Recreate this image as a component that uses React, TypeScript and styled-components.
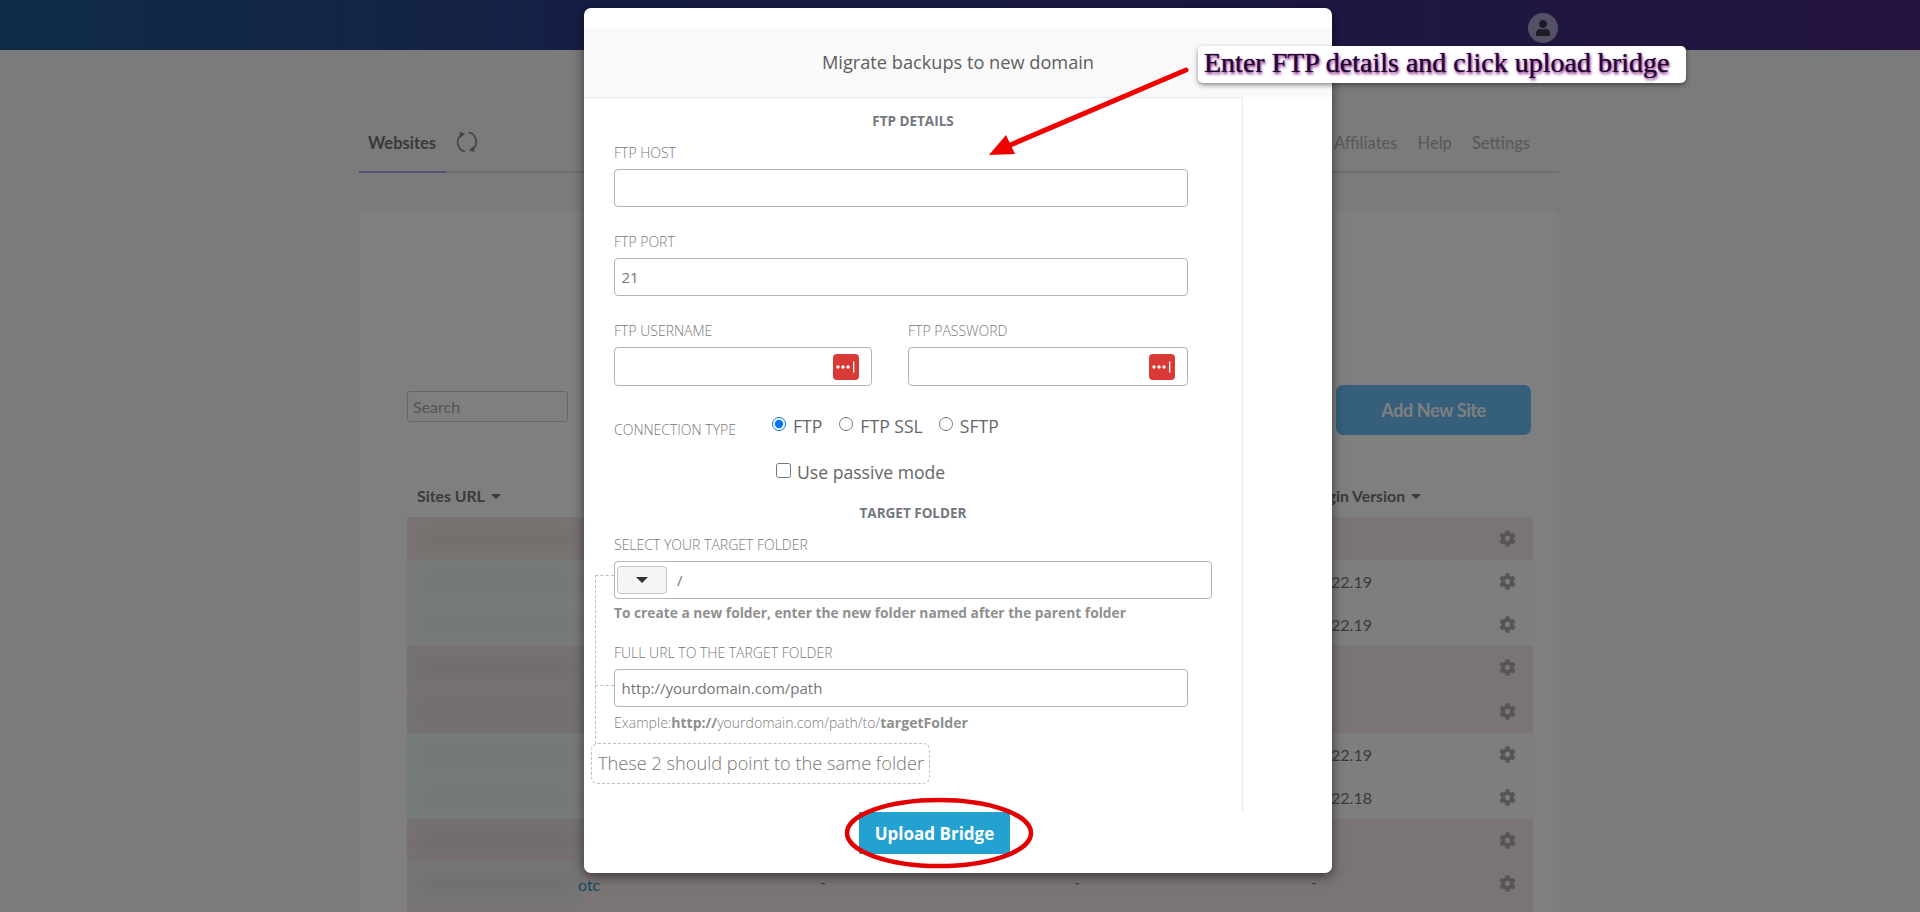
import React from "react";
import styled, { createGlobalStyle } from "styled-components";
import { FaCog, FaUser } from "react-icons/fa";

const Global = createGlobalStyle`
  html, body { margin: 0; height: 912px; overflow: hidden; background: #f6f7f7; }
  * { box-sizing: border-box; }
  body { font-family: Lato, "Open Sans", sans-serif; }
`;

const Page = styled.div`
  position: relative;
  width: 1920px;
  height: 912px;
  overflow: hidden;
`;
const TopBar = styled.header`
  height: 50px;
  background: linear-gradient(90deg, #1e5a8e 0%, #2c3c8a 32%, #48287e 100%);
  display: flex;
  justify-content: flex-end;
  align-items: center;
  padding: 6px 362px 0 0;
`;
const Avatar = styled.div`
  width: 30px;
  height: 30px;
  border-radius: 50%;
  background: #a8a0ca;
  color: #3b3650;
  display: flex;
  align-items: center;
  justify-content: center;
  font-size: 16px;
`;
const Main = styled.main`
  width: 1200px;
  margin-left: 359px;
`;
const Nav = styled.nav`
  margin-top: 73px;
  height: 50px;
  display: flex;
  align-items: stretch;
  border-bottom: 2px solid #dcdcdc;
  font-size: 16.5px;
`;
const ActiveTab = styled.div`
  width: 87px;
  margin-bottom: -2px;
  border-bottom: 2px solid #b49be8;
  padding-left: 9px;
  padding-top: 10px;
  font-weight: 700;
  color: #747474;
`;
const Refresh = styled.svg`
  width: 24px;
  height: 24px;
  margin: 7px 0 0 9px;
  color: #8a8a8a;
`;
const NavLinks = styled.div`
  margin-left: auto;
  display: flex;
  gap: 20px;
  padding: 10px 29px 0 0;
  color: #b4b4b4;
  font-weight: 500;
`;
const Card = styled.section`
  margin-top: 38px;
  height: 720px;
  background: #fff;
  border-radius: 8px;
  padding: 174px 26px 0 48px;
`;
const Toolbar = styled.div`
  height: 50px;
  display: flex;
  justify-content: space-between;
  align-items: flex-start;
  padding-top: 6px;
`;
const Search = styled.input`
  width: 161px;
  height: 31px;
  margin: 0;
  padding: 0 5px;
  border: 1px solid #cfcfcf;
  border-radius: 3px;
  background: #fff;
  font: 16px Lato, sans-serif;
  &::placeholder { color: #aaa; opacity: 1; }
`;
const AddButton = styled.div`
  width: 195px;
  height: 50px;
  margin: -6px 2px 0 0;
  border-radius: 7px;
  background: #6abef6;
  color: #fff;
  font-size: 18px;
  font-weight: 700;
  letter-spacing: -0.4px;
  display: flex;
  align-items: center;
  justify-content: center;
`;
const HeadRow = styled.div`
  height: 82px;
  padding: 51px 0 0 10px;
  display: grid;
  grid-template-columns: 888px 1fr;
  color: #747474;
  font-size: 15.8px;
  font-weight: 700;
`;
const Caret = styled.span`
  display: inline-block;
  margin-left: 6px;
  border-left: 5px solid transparent;
  border-right: 5px solid transparent;
  border-top: 5px solid #747474;
  vertical-align: 3px;
`;
const Row = styled.div<{ $alert?: boolean }>`
  height: 43.15px;
  display: grid;
  grid-template-columns: 413px 254px 237px 140px 1fr;
  align-items: center;
  background: ${(p) => (p.$alert ? "#f7e9e9" : "#fcfcfc")};
  color: #767676;
  font-size: 16px;
`;
const SiteCell = styled.div`
  position: relative;
  height: 43px;
  line-height: 45px;
  padding-left: 171px;
  color: #2c95bc;
  overflow: hidden;
`;
const Smear = styled.span<{ $tint: string }>`
  position: absolute;
  left: 0;
  top: 0;
  width: 175px;
  height: 44px;
  background: ${(p) => p.$tint};
  overflow: hidden;
  &::after {
    content: "";
    position: absolute;
    left: 14px;
    right: 10px;
    top: 14px;
    height: 16px;
    background: rgba(0, 0, 0, 0.035);
    filter: blur(7px);
  }
`;
const SiteName = styled.span`
  position: relative;
`;
const Dash = styled.div`
  line-height: 1;
  margin-top: -4px;
`;
const Version = styled.div`
  padding-left: 7px;
`;
const Gear = styled.div`
  padding-left: 48px;
  display: flex;
  color: #aaa;
  font-size: 17px;
`;

const Backdrop = styled.div`
  position: absolute;
  inset: 0;
  background: rgba(0, 0, 0, 0.5);
`;
const Modal = styled.div`
  position: absolute;
  left: 584px;
  top: 8px;
  width: 748px;
  height: 865px;
  padding-top: 19px;
  background: #fff;
  border-radius: 7px;
  box-shadow: 0 3px 12px rgba(0, 0, 0, 0.55);
  font-family: "Open Sans", sans-serif;
`;
const ModalHead = styled.div`
  height: 70px;
  background: #f9f9f9;
  color: #5e5e5e;
  font-size: 18.2px;
  display: flex;
  align-items: center;
  justify-content: center;
`;
const ModalBody = styled.div`
  width: 659px;
  height: 715px;
  padding: 14px 0 0 30px;
  border-top: 1px solid #eaeaea;
  border-right: 1px solid #eaeaea;
  position: relative;
`;
const SectionTitle = styled.div<{ $top?: number }>`
  width: 598px;
  height: 18px;
  line-height: 18px;
  text-align: center;
  font-size: 13.5px;
  font-weight: 700;
  color: #73777e;
  margin-top: ${(p) => p.$top ?? 0}px;
`;
const Label = styled.label<{ $top?: number }>`
  display: block;
  height: 18px;
  line-height: 18px;
  font-size: 14px;
  font-weight: 300;
  color: #777;
  margin: ${(p) => p.$top ?? 0}px 0 7px;
`;
const Input = styled.input<{ $w?: number; $h?: number }>`
  display: block;
  width: ${(p) => p.$w ?? 574}px;
  height: ${(p) => p.$h ?? 38}px;
  margin: 0;
  padding: 0 6.5px 1px;
  border: 1px solid #b5b5b5;
  border-radius: 4px;
  background: #fff;
  font: 15px "Open Sans", sans-serif;
  color: #757575;
`;
const TwoCols = styled.div`
  display: flex;
  gap: 36px;
  margin-top: 26px;
`;
const FieldBox = styled.div`
  position: relative;
`;
const PassIcon = styled.svg`
  position: absolute;
  right: 13px;
  bottom: 6px;
  width: 26px;
  height: 26px;
`;
const ConnectionRow = styled.div`
  display: flex;
  height: 38px;
  margin-top: 26px;
`;
const ConnLabel = styled.span`
  width: 158px;
  font-size: 14px;
  font-weight: 300;
  color: #777;
  padding-top: 9px;
  line-height: 18px;
`;
const Choice = styled.label<{ $gap: number }>`
  display: flex;
  align-items: flex-start;
  margin: 2px ${(p) => p.$gap}px 0 0;
  font-size: 17.6px;
  color: #666;
  line-height: 24px;
`;
const Radio = styled.input`
  width: 14px;
  height: 14px;
  margin: 3px 7px 0 0;
`;
const PassiveRow = styled.label`
  display: flex;
  align-items: flex-start;
  margin: 9px 0 0 162px;
  height: 27px;
  font-size: 17.6px;
  color: #666;
  line-height: 26px;
`;
const Check = styled.input`
  width: 15px;
  height: 15px;
  margin: 4px 6px 0 0;
`;
const FolderBox = styled.div`
  position: relative;
  width: 598px;
  height: 38px;
  border: 1px solid #b5b5b5;
  border-radius: 4px;
  display: flex;
  align-items: center;
  padding-left: 2px;
  background: #fff;
  font-size: 15px;
  color: #757575;
`;
const DropButton = styled.div`
  width: 50px;
  height: 28px;
  border: 1px solid #c4c4c4;
  border-radius: 4px;
  background: #f5f5f5;
  display: flex;
  align-items: center;
  justify-content: center;
  margin-right: 10px;
  &::before {
    content: "";
    border-left: 6px solid transparent;
    border-right: 6px solid transparent;
    border-top: 6px solid #333;
  }
`;
const Help = styled.div<{ $bold?: boolean }>`
  height: 18px;
  line-height: 18px;
  margin-top: ${(p) => (p.$bold ? 5 : 7)}px;
  font-size: ${(p) => (p.$bold ? 13.75 : 14.05)}px;
  font-weight: ${(p) => (p.$bold ? 700 : 300)};
  color: ${(p) => (p.$bold ? "#8f8f8f" : "#7c7c7c")};
  white-space: nowrap;
  b { font-weight: 700; color: #8f8f8f; }
`;
const SameFolder = styled.div`
  width: 339px;
  height: 41px;
  margin: 11px 0 0 -23px;
  padding-left: 6px;
  border: 1px dashed #bdbdbd;
  border-radius: 7px;
  font-size: 18.2px;
  font-weight: 300;
  line-height: 38px;
  color: #777;
  white-space: nowrap;
`;
const Bracket = styled.div`
  position: absolute;
  left: 11px;
  top: 477px;
  width: 19px;
  height: 169px;
  border-left: 1px dashed #bdbdbd;
  border-top: 1px dashed #bdbdbd;
`;
const BracketTick = styled.div`
  position: absolute;
  left: 11px;
  top: 587px;
  width: 19px;
  border-top: 1px dashed #bdbdbd;
`;
const ModalFoot = styled.div`
  display: flex;
  justify-content: center;
  padding-right: 47px;
`;
const UploadButton = styled.button`
  width: 151px;
  height: 42px;
  border: 0;
  margin: 0;
  background: #23a1d1;
  color: #fff;
  font: 700 17px "Open Sans", sans-serif;
`;
const Callout = styled.div`
  position: absolute;
  left: 1198px;
  top: 46px;
  width: 488px;
  height: 37px;
  padding-left: 6px;
  background: #fff;
  border-radius: 5px;
  box-shadow: 0 2px 5px rgba(0, 0, 0, 0.45);
  font-family: "Liberation Serif", serif;
  font-size: 28px;
  line-height: 34px;
  white-space: nowrap;
  color: #1d0b2e;
  text-shadow: 1px 2px 3px #7a107a, 0 0 1px #800080;
`;
const Annotations = styled.svg`
  position: absolute;
  left: 0;
  top: 0;
  pointer-events: none;
`;

const rows = [
  { alert: true, tint: "#f1e6e4" },
  { tint: "#eef6f6", version: "4.22.19" },
  { tint: "#eef6f6", version: "4.22.19" },
  { alert: true, tint: "#ebe3e1" },
  { alert: true, tint: "#ebe3e1" },
  { tint: "#edf6f6", version: "4.22.19" },
  { tint: "#edf6f6", version: "4.22.18" },
  { alert: true, tint: "#ebe2e0" },
  { alert: true, tint: "#e8eaea", site: "otc", dash: true },
  { alert: true, tint: "transparent" },
];

const LastPass = () => (
  <PassIcon viewBox="0 0 26 26">
    <rect width="26" height="26" rx="4" fill="#d93a36" />
    <circle cx="5" cy="13" r="1.7" fill="#fff" />
    <circle cx="10" cy="13" r="1.7" fill="#fff" />
    <circle cx="15" cy="13" r="1.7" fill="#fff" />
    <rect x="20" y="7.5" width="1.3" height="11" fill="#fff" />
  </PassIcon>
);

export default function App() {
  return (
    <Page>
      <Global />
      <TopBar>
        <Avatar>
          <FaUser />
        </Avatar>
      </TopBar>
      <Main>
        <Nav>
          <ActiveTab>Websites</ActiveTab>
          <Refresh viewBox="0 0 24 24" fill="none" stroke="currentColor" strokeWidth="1.7">
            <path d="M6 4.8A10 10 0 0 0 10.2 21.8" />
            <path d="M13.8 2.2A10 10 0 0 1 18 19.2" />
            <path d="M4.5 1.8L10 3.5L5.5 8Z" fill="currentColor" stroke="none" />
            <path d="M19.5 22.2L14 20.5L18.5 16Z" fill="currentColor" stroke="none" />
          </Refresh>
          <NavLinks>
            <span>Affiliates</span>
            <span>Help</span>
            <span>Settings</span>
          </NavLinks>
        </Nav>
        <Card>
          <Toolbar>
            <Search placeholder="Search" />
            <AddButton>Add New Site</AddButton>
          </Toolbar>
          <HeadRow>
            <span>
              Sites URL
              <Caret />
            </span>
            <span>
              Plugin Version
              <Caret />
            </span>
          </HeadRow>
          {rows.map((r, i) => (
            <Row key={i} $alert={r.alert}>
              <SiteCell>
                <Smear $tint={r.tint} />
                <SiteName>{r.site}</SiteName>
              </SiteCell>
              <Dash>{r.dash ? "-" : ""}</Dash>
              <Dash>{r.dash ? "-" : ""}</Dash>
              {r.version ? <Version>{r.version}</Version> : <Dash>{r.dash ? "-" : ""}</Dash>}
              <Gear>{i < 9 && <FaCog />}</Gear>
            </Row>
          ))}
        </Card>
      </Main>
      <Backdrop />
      <Modal>
        <ModalHead>Migrate backups to new domain</ModalHead>
        <ModalBody>
          <SectionTitle>FTP DETAILS</SectionTitle>
          <Label $top={14}>FTP HOST</Label>
          <Input />
          <Label $top={26}>FTP PORT</Label>
          <Input defaultValue="21" />
          <TwoCols>
            <FieldBox>
              <Label>FTP USERNAME</Label>
              <Input $w={258} $h={39} />
              <LastPass />
            </FieldBox>
            <FieldBox>
              <Label>FTP PASSWORD</Label>
              <Input $w={280} $h={39} />
              <LastPass />
            </FieldBox>
          </TwoCols>
          <ConnectionRow>
            <ConnLabel>CONNECTION TYPE</ConnLabel>
            <Choice $gap={17}>
              <Radio type="radio" name="conn" defaultChecked />
              FTP
            </Choice>
            <Choice $gap={16}>
              <Radio type="radio" name="conn" />
              FTP SSL
            </Choice>
            <Choice $gap={0}>
              <Radio type="radio" name="conn" />
              SFTP
            </Choice>
          </ConnectionRow>
          <PassiveRow>
            <Check type="checkbox" />
            Use passive mode
          </PassiveRow>
          <SectionTitle $top={18}>TARGET FOLDER</SectionTitle>
          <Label $top={14}>SELECT YOUR TARGET FOLDER</Label>
          <FolderBox>
            <DropButton />/
          </FolderBox>
          <Help $bold>To create a new folder, enter the new folder named after the parent folder</Help>
          <Label $top={22}>FULL URL TO THE TARGET FOLDER</Label>
          <Input defaultValue="http://yourdomain.com/path" />
          <Help>
            Example:<b>http://</b>yourdomain.com/path/to/<b>targetFolder</b>
          </Help>
          <SameFolder>These 2 should point to the same folder</SameFolder>
          <Bracket />
          <BracketTick />
        </ModalBody>
        <ModalFoot>
          <UploadButton>Upload Bridge</UploadButton>
        </ModalFoot>
      </Modal>
      <Callout>Enter FTP details and click upload bridge</Callout>
      <Annotations width="1920" height="912" viewBox="0 0 1920 912" fill="none">
        <path d="M1186 70L1008 146" stroke="#f10000" strokeWidth="5" strokeLinecap="round" />
        <path d="M989 155L1006 135L1015 154Z" fill="#f10000" />
        <ellipse cx="939" cy="833" rx="92" ry="33" stroke="#e40000" strokeWidth="4.5" />
      </Annotations>
    </Page>
  );
}
